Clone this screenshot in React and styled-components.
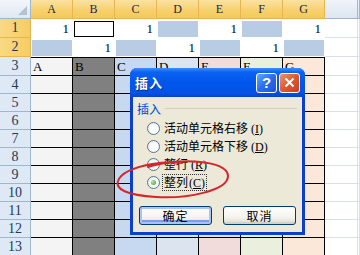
import styled, { createGlobalStyle } from "styled-components";

const GlobalStyle = createGlobalStyle`
  html, body {
    margin: 0;
    padding: 0;
    background: #fff;
    overflow: hidden;
  }
  body {
    font-family: "Liberation Serif", "Noto Sans CJK SC", serif;
  }
`;

const Page = styled.div`
  position: relative;
  width: 360px;
  height: 255px;
  overflow: hidden;
`;

const Sheet = styled.div`
  display: grid;
  grid-template-columns: 31px repeat(7, 42px) 33px 1fr;
  grid-template-rows: 19px 19px 19px 19px repeat(10, 18px);
  font-size: 13px;
  color: #000;
`;

const Corner = styled.div`
  position: relative;
  box-sizing: border-box;
  background: linear-gradient(#f3f6fb, #dfe7f2);
  border-right: 1px solid #9eb6ce;
  border-bottom: 1px solid #9eb6ce;
  &::after {
    content: "";
    position: absolute;
    right: 3px;
    bottom: 3px;
    border-left: 9px solid transparent;
    border-bottom: 9px solid #b4c2d3;
  }
`;

const ColHead = styled.div`
  box-sizing: border-box;
  display: flex;
  align-items: center;
  justify-content: center;
  font-size: 12px;
  color: #1a2a3c;
  background: ${(p) =>
    p.$on
      ? "linear-gradient(#fbe2a2, #f7d06d 60%, #f5c95b)"
      : "linear-gradient(#f0f4fa, #dde6f1)"};
  border-right: 1px solid ${(p) => (p.$on ? "#e6b653" : "#9eb6ce")};
  border-bottom: 1px solid ${(p) => (p.$on ? "#e6b653" : "#9eb6ce")};
`;

const RowHead = styled.div`
  box-sizing: border-box;
  display: flex;
  align-items: center;
  justify-content: center;
  font-size: 14px;
  color: #233a57;
  background: ${(p) =>
    p.$on ? "linear-gradient(90deg, #f9d985, #f6cd63)" : "#dfe8f5"};
  border-right: 1px solid ${(p) => (p.$on ? "#e6b653" : "#9eb6ce")};
  border-bottom: 1px solid ${(p) => (p.$on ? "#e6b653" : "#9eb6ce")};
`;

const TopCell = styled.div`
  box-sizing: border-box;
  display: flex;
  align-items: center;
  justify-content: flex-end;
  padding-right: 3px;
  border: 2px solid #fff;
  border-width: 2px 1px 1px 1px;
  background: ${(p) => (p.$fill ? "#b8cce4" : "#fff")};
  box-shadow: ${(p) => (p.$active ? "inset 0 0 0 1px #000" : "none")};
`;

const ColorCell = styled.div`
  box-sizing: border-box;
  display: flex;
  align-items: center;
  padding-left: 2px;
  background: ${(p) => p.$bg};
  border-right: 1px solid #000;
  border-bottom: 1px solid #000;
  border-top: ${(p) => (p.$first ? "1px solid #000" : "none")};
`;

const PlainCell = styled.div`
  box-sizing: border-box;
  background: #fff;
  border-right: 1px solid #dadfe8;
  border-bottom: 1px solid #dadfe8;
`;

const Dialog = styled.div`
  position: absolute;
  left: 130px;
  top: 68px;
  width: 175px;
  height: 167px;
  display: flex;
  flex-direction: column;
  box-sizing: border-box;
  border-radius: 7px 7px 0 0;
  background: #0a3fcf;
  font-family: "Noto Sans CJK SC", "Liberation Sans", sans-serif;
  font-size: 12px;
`;

const TitleBar = styled.div`
  height: 29px;
  display: flex;
  align-items: center;
  gap: 2px;
  padding: 0 5px;
  border-radius: 7px 7px 0 0;
  background: linear-gradient(
    #3d8fff 0%,
    #0c62f2 14%,
    #0157eb 50%,
    #0353e5 85%,
    #0a44cf 100%
  );
`;

const Title = styled.div`
  flex: 1;
  color: #fff;
  font-weight: bold;
  font-size: 13px;
  letter-spacing: 1px;
  text-shadow: 1px 1px 0 #0a2a8a;
`;

const TitleButton = styled.div`
  width: 21px;
  height: 20px;
  box-sizing: border-box;
  display: flex;
  align-items: center;
  justify-content: center;
  border: 1px solid #fff;
  border-radius: 3px;
  color: #fff;
  font-family: "Liberation Sans", sans-serif;
  font-weight: bold;
  font-size: 15px;
  background: ${(p) =>
    p.$close
      ? "linear-gradient(135deg, #f0926c, #de5a2c 50%, #c5401a)"
      : "linear-gradient(135deg, #6aa4ff, #2a6cf0 50%, #1b55d8)"};
`;

const Body = styled.div`
  flex: 1;
  margin: 0 3px 3px;
  background: #ece9d8;
  padding: 4px 5px 0 4px;
  display: flex;
  flex-direction: column;
`;

const GroupHead = styled.div`
  display: flex;
  align-items: center;
  gap: 4px;
  height: 14px;
  color: #0046d5;
  &::after {
    content: "";
    flex: 1;
    height: 1px;
    background: #d0d0bf;
    margin-top: 1px;
  }
`;

const Options = styled.div`
  margin-top: 4px;
  padding-left: 10px;
  display: flex;
  flex-direction: column;
`;

const Option = styled.div`
  height: 18px;
  display: flex;
  align-items: center;
  gap: 3px;
  color: #000;
`;

const Radio = styled.span`
  width: 13px;
  height: 13px;
  box-sizing: border-box;
  border-radius: 50%;
  border: 1px solid #5b7590;
  background: radial-gradient(circle at 60% 60%, #fff 30%, #e4e4dc 100%);
  display: flex;
  align-items: center;
  justify-content: center;
  &::after {
    content: "";
    width: 5px;
    height: 5px;
    border-radius: 50%;
    background: ${(p) =>
      p.$checked ? "radial-gradient(circle at 35% 35%, #a5f0a0, #21a121)" : "transparent"};
  }
`;

const Label = styled.span`
  padding: 0 1px;
  line-height: 13px;
  outline: ${(p) => (p.$focus ? "1px dotted #333" : "none")};
  outline-offset: 0;
`;

const Key = styled.span`
  margin-left: ${(p) => (p.$gap ? "3px" : "1px")};
  font-family: "Liberation Serif", serif;
  font-size: 12px;
  & u {
    text-underline-offset: 1px;
  }
`;

const Buttons = styled.div`
  margin-top: auto;
  margin-bottom: 7px;
  padding-left: 2px;
  display: flex;
  gap: 11px;
`;

const Button = styled.div`
  width: 73px;
  height: 19px;
  box-sizing: border-box;
  display: flex;
  align-items: center;
  justify-content: center;
  border: 1px solid #003c74;
  border-radius: 3px;
  background: linear-gradient(#ffffff, #f4f3ee 60%, #dcdad0);
  box-shadow: ${(p) =>
    p.$default ? "inset 0 0 0 2px #a9c3f2, inset 0 -2px 0 2px #7f9de0" : "inset 0 -2px 0 #d6d0c5"};
  color: #000;
  letter-spacing: 1px;
`;

const Annotation = styled.svg`
  position: absolute;
  left: 112px;
  top: 156px;
  width: 124px;
  height: 46px;
  overflow: visible;
`;

const cols = ["A", "B", "C", "D", "E", "F", "G"];
const colors = ["#f4f4f4", "#808080", "#c6d9f0", "#dbe4ef", "#f2dcdb", "#ebf0de", "#fbe8d9"];

const row1 = [
  { v: "1" },
  { active: true },
  { v: "1" },
  { fill: true },
  { v: "1" },
  { fill: true },
  { v: "1" },
];
const row2 = [
  { fill: true },
  { v: "1" },
  { fill: true },
  { v: "1" },
  { fill: true },
  { v: "1" },
  { fill: true },
];

const options = [
  { text: "活动单元格右移", key: "I", gap: true },
  { text: "活动单元格下移", key: "D", gap: true },
  { text: "整行", key: "R", gap: true },
  { text: "整列", key: "C", checked: true },
];

export default function App() {
  const lower = [];
  for (let r = 3; r <= 13; r++) lower.push(r);

  return (
    <>
      <GlobalStyle />
      <Page>
        <Sheet>
          <Corner />
          {cols.map((c) => (
            <ColHead key={c} $on>
              {c}
            </ColHead>
          ))}
          <ColHead />
          <ColHead />

          <RowHead $on>1</RowHead>
          {row1.map((c, i) => (
            <TopCell key={i} $fill={c.fill} $active={c.active}>
              {c.v}
            </TopCell>
          ))}
          <PlainCell />
          <PlainCell />

          <RowHead $on>2</RowHead>
          {row2.map((c, i) => (
            <TopCell key={i} $fill={c.fill}>
              {c.v}
            </TopCell>
          ))}
          <PlainCell />
          <PlainCell />

          {lower.map((r) => [
            <RowHead key={"h" + r}>{r}</RowHead>,
            ...cols.map((c, i) => (
              <ColorCell key={r + c} $bg={colors[i]} $first={r === 3}>
                {r === 3 ? c : ""}
              </ColorCell>
            )),
            <PlainCell key={"p" + r} />,
            <PlainCell key={"q" + r} />,
          ])}
        </Sheet>

        <Dialog>
          <TitleBar>
            <Title>插入</Title>
            <TitleButton>?</TitleButton>
            <TitleButton $close>
              <svg width="11" height="11" viewBox="0 0 11 11">
                <path d="M1.5 1.5 L9.5 9.5 M9.5 1.5 L1.5 9.5" stroke="#fff" strokeWidth="2" />
              </svg>
            </TitleButton>
          </TitleBar>
          <Body>
            <GroupHead>插入</GroupHead>
            <Options>
              {options.map((o) => (
                <Option key={o.key}>
                  <Radio $checked={o.checked} />
                  <Label $focus={o.checked}>
                    {o.text}
                    <Key $gap={o.gap}>
                      (<u>{o.key}</u>)
                    </Key>
                  </Label>
                </Option>
              ))}
            </Options>
            <Buttons>
              <Button $default>确定</Button>
              <Button>取消</Button>
            </Buttons>
          </Body>
        </Dialog>

        <Annotation viewBox="0 0 124 46">
          <path
            d="M36 11 C62 2, 116 3, 116 20 C116 35, 74 43, 44 41 C14 39, 3 33, 6 25 C9 16, 24 11, 40 8 C52 6, 62 6, 70 7"
            fill="none"
            stroke="#d7262b"
            strokeWidth="2"
            strokeLinecap="round"
          />
        </Annotation>
      </Page>
    </>
  );
}
